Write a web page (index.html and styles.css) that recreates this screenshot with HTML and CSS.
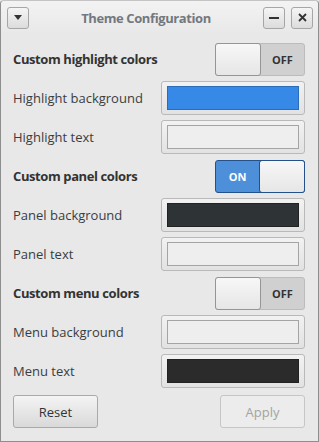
FILE: index.html
```html
<!DOCTYPE html>
<html>
<head>
  <meta charset="utf-8">
  <title>Theme Configuration</title>
  <link rel="stylesheet" href="styles.css">
</head>
<body>
  <div class="window">
    <div class="titlebar">
      <button class="tb-button">
        <svg width="8" height="5" viewBox="0 0 8 5"><path d="M0 0 H8 L4 5 Z" fill="#333"/></svg>
      </button>
      <div class="title">Theme Configuration</div>
      <button class="tb-button">
        <svg width="10" height="2" viewBox="0 0 10 2"><rect width="10" height="2" fill="#333"/></svg>
      </button>
      <button class="tb-button">
        <svg width="9" height="9" viewBox="0 0 9 9"><path d="M1 1 L8 8 M8 1 L1 8" stroke="#333" stroke-width="1.8"/></svg>
      </button>
    </div>

    <div class="content">
      <div class="row">
        <span class="label bold">Custom highlight colors</span>
        <div class="switch"><span class="knob"></span><span class="state">OFF</span></div>
      </div>
      <div class="row">
        <span class="label">Highlight background</span>
        <div class="color-button"><span class="swatch blue"></span></div>
      </div>
      <div class="row">
        <span class="label">Highlight text</span>
        <div class="color-button"><span class="swatch light"></span></div>
      </div>

      <div class="row">
        <span class="label bold">Custom panel colors</span>
        <div class="switch on"><span class="state">ON</span><span class="knob"></span></div>
      </div>
      <div class="row">
        <span class="label">Panel background</span>
        <div class="color-button"><span class="swatch dark"></span></div>
      </div>
      <div class="row">
        <span class="label">Panel text</span>
        <div class="color-button"><span class="swatch light"></span></div>
      </div>

      <div class="row">
        <span class="label bold">Custom menu colors</span>
        <div class="switch"><span class="knob"></span><span class="state">OFF</span></div>
      </div>
      <div class="row">
        <span class="label">Menu background</span>
        <div class="color-button"><span class="swatch light"></span></div>
      </div>
      <div class="row">
        <span class="label">Menu text</span>
        <div class="color-button"><span class="swatch darker"></span></div>
      </div>
    </div>

    <div class="actions">
      <button class="button">Reset</button>
      <button class="button disabled">Apply</button>
    </div>
  </div>
</body>
</html>
```

FILE: styles.css
```css
/* General Styling */
body {
  margin: 0;
  padding: 0;
  font-family: "Open Sans", "Noto Sans", sans-serif;
  font-size: 13px;
  color: #333;
  background-color: #e8e8e8;
}

.window {
  box-sizing: border-box;
  width: 319px;
  height: 442px;
  display: flex;
  flex-direction: column;
  background-color: #e8e8e8;
  border: 1px solid #8e8e8e;
  border-top-color: #c4c4c4;
  border-radius: 4px 4px 0 0;
}

/* Title bar */
.titlebar {
  height: 33px;
  display: flex;
  align-items: center;
  gap: 6px;
  padding: 0 5px 0 6px;
  background: linear-gradient(#f3f3f3, #e8e8e8);
  border-radius: 4px 4px 0 0;
}

.title {
  flex: 1;
  text-align: center;
  font-weight: bold;
  font-size: 13px;
  letter-spacing: -0.4px;
  color: #73787e;
}

.tb-button {
  width: 22px;
  height: 22px;
  padding: 0;
  display: flex;
  align-items: center;
  justify-content: center;
  border: 1px solid #a6a6a6;
  border-radius: 3px;
  background: linear-gradient(#f5f5f5, #dcdcdc);
}

/* Rows */
.content {
  padding: 8px 13px 0 12px;
}

.row {
  height: 34px;
  margin-bottom: 5px;
  display: flex;
  align-items: center;
  justify-content: space-between;
}

.label {
  color: #3a3d40;
}

.bold {
  font-weight: bold;
  letter-spacing: -0.4px;
  color: #333;
}

/* Switch */
.switch {
  box-sizing: border-box;
  width: 90px;
  height: 33px;
  display: flex;
  background-color: #d0d0d0;
  border: 1px solid #bcbcbc;
  border-radius: 3px;
}

.switch .knob {
  box-sizing: border-box;
  width: 46px;
  margin: -1px 0 -1px -1px;
  background: linear-gradient(#f7f7f7, #e6e6e6);
  border: 1px solid #959595;
  border-radius: 3px;
}

.switch .state {
  flex: 1;
  display: flex;
  align-items: center;
  justify-content: center;
  font-weight: bold;
  font-size: 11px;
  color: #333;
}

.switch.on {
  background-color: #4d8fd8;
  border-color: #24508c;
}

.switch.on .state {
  color: white;
}

.switch.on .knob {
  margin: -1px -1px -1px 0;
  border-color: #24508c;
}

/* Color buttons */
.color-button {
  box-sizing: border-box;
  width: 144px;
  height: 34px;
  padding: 4px 5px;
  display: flex;
  background: linear-gradient(#f2f2f2, #e2e2e2);
  border: 1px solid #b9b9b9;
  border-radius: 3px;
}

.swatch {
  flex: 1;
  border: 1px solid #a4a4a4;
}

.swatch.blue {
  background-color: #3689e6;
  border-color: #2b6db8;
}

.swatch.light {
  background-color: #eeeeee;
}

.swatch.dark {
  background-color: #2e3436;
  border-color: #222;
}

.swatch.darker {
  background-color: #2b2b2b;
  border-color: #222;
}

/* Bottom buttons */
.actions {
  display: flex;
  justify-content: space-between;
  padding: 2px 13px 0 12px;
}

.button {
  width: 85px;
  height: 33px;
  font-family: inherit;
  font-size: 13px;
  color: #333;
  background: linear-gradient(#f4f4f4, #d9d9d9);
  border: 1px solid #a9a9a9;
  border-radius: 3px;
}

.button.disabled {
  color: #a3a3a3;
  background: #ececec;
  border-color: #c6c6c6;
}
```
